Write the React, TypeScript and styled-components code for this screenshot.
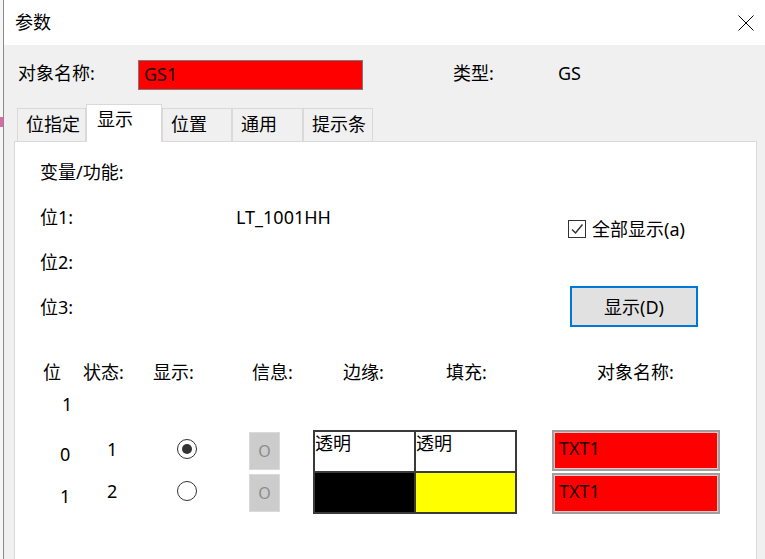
import * as React from 'react';
import styled, { createGlobalStyle } from 'styled-components';

const GlobalStyle = createGlobalStyle`
  html, body {
    margin: 0;
    padding: 0;
  }
  body {
    font-family: "Noto Sans", "Noto Sans CJK SC", sans-serif;
    font-size: 18px;
    color: #000;
    background: #fff;
  }
`;

const Screen = styled.div`
  display: flex;
  width: 765px;
  height: 559px;
  overflow: hidden;
`;

const DesktopStrip = styled.div`
  width: 3px;
  flex-shrink: 0;
  background: #f6f6f6;
`;

const PinkMark = styled.div`
  margin-top: 117px;
  height: 10px;
  background: #d86aa8;
`;

const Window = styled.div`
  flex: 1;
  display: flex;
  flex-direction: column;
  border-left: 1px solid #8a8a8a;
  background: #f0f0f0;
`;

const TitleBar = styled.div`
  height: 45px;
  flex-shrink: 0;
  display: flex;
  align-items: center;
  justify-content: space-between;
  padding: 0 11px;
  background: #fff;
`;

const Title = styled.span`
  font-size: 18px;
  line-height: 24px;
  margin-top: -1px;
`;

const Body = styled.div`
  padding: 15px 8px 0 10px;
`;

const InfoRow = styled.div`
  display: flex;
  align-items: center;
  height: 30px;
  padding-left: 4px;
`;

const Label = styled.span<{ $width?: number }>`
  display: inline-block;
  width: ${p => (p.$width ? `${p.$width}px` : 'auto')};
  line-height: 24px;
  margin-top: -4px;
  white-space: nowrap;
`;

const NameInput = styled.div`
  box-sizing: border-box;
  width: 225px;
  height: 30px;
  border: 1px solid #7a7a7a;
  background: #ff0000;
  padding-left: 5px;
  line-height: 27px;
  color: #1a0000;
  margin-right: 90px;
`;

const TabStrip = styled.div`
  display: flex;
  align-items: flex-end;
  margin-top: 14px;
  padding-left: 3px;
  height: 37px;
`;

const Tab = styled.div<{ $width: number; $active?: boolean }>`
  box-sizing: border-box;
  position: relative;
  z-index: ${p => (p.$active ? 1 : 0)};
  width: ${p => p.$width}px;
  height: ${p => (p.$active ? 38 : 33)}px;
  margin-bottom: ${p => (p.$active ? -1 : 0)}px;
  padding: ${p => (p.$active ? '2px 0 0 10px' : '3px 0 0 8px')};
  border: 1px solid #d9d9d9;
  border-bottom: none;
  background: ${p => (p.$active ? '#fff' : '#f0f0f0')};
  line-height: 24px;
  white-space: nowrap;
`;

const Panel = styled.div`
  box-sizing: border-box;
  height: 440px;
  border: 1px solid #d9d9d9;
  background: #fff;
  padding: 7px 0 0 25px;
`;

const TopSection = styled.div`
  display: flex;
`;

const FieldGrid = styled.div`
  width: 528px;
  display: grid;
  grid-template-columns: 196px 1fr;
  grid-auto-rows: 45px;
  align-items: center;
`;

const FieldText = styled.span<{ $span?: boolean }>`
  line-height: 24px;
  grid-column: ${p => (p.$span ? '1 / 3' : 'auto')};
`;

const RightColumn = styled.div`
  display: flex;
  flex-direction: column;
  align-items: flex-start;
`;

const CheckRow = styled.label`
  display: flex;
  align-items: center;
  gap: 6px;
  margin-top: 68px;
  line-height: 24px;
  white-space: nowrap;
`;

const CheckBox = styled.span`
  box-sizing: border-box;
  width: 18px;
  height: 18px;
  border: 1px solid #333;
  background: #fff;
  display: flex;
  align-items: center;
  justify-content: center;
`;

const ShowButton = styled.button`
  box-sizing: border-box;
  margin: 45px 0 0 2px;
  width: 128px;
  height: 41px;
  border: 2px solid #0078d7;
  background: #e1e1e1;
  font-family: inherit;
  font-size: 18px;
  color: #000;
  padding: 0 0 2px;
`;

const HeaderRow = styled.div`
  display: flex;
  margin-top: 31px;
  line-height: 24px;
`;

const HeaderCell = styled.span<{ $width?: number; $pad?: number }>`
  width: ${p => (p.$width ? `${p.$width}px` : 'auto')};
  padding-left: ${p => p.$pad ?? 0}px;
  box-sizing: border-box;
  white-space: nowrap;
`;

const SubHeader = styled.div`
  margin-top: 8px;
  padding-left: 22px;
  line-height: 24px;
`;

const DataArea = styled.div`
  display: flex;
  margin-top: 14px;
`;

const StateGrid = styled.div`
  display: grid;
  grid-template-columns: 60px 60px 80px 73px;
  grid-auto-rows: 42px;
`;

const Cell = styled.div<{ $pad: number; $shift?: number; $top?: boolean }>`
  display: flex;
  align-items: ${p => (p.$top ? 'flex-start' : 'center')};
  padding-left: ${p => p.$pad}px;
  padding-top: ${p => (p.$shift && p.$shift > 0 ? p.$shift : 0)}px;
  padding-bottom: ${p => (p.$shift && p.$shift < 0 ? -p.$shift : 0)}px;
  line-height: 24px;
`;

const Radio = styled.span<{ $checked?: boolean }>`
  box-sizing: border-box;
  width: 20px;
  height: 20px;
  border: 1.5px solid #333;
  border-radius: 50%;
  display: flex;
  align-items: center;
  justify-content: center;

  &::after {
    content: '';
    display: ${p => (p.$checked ? 'block' : 'none')};
    width: 10px;
    height: 10px;
    border-radius: 50%;
    background: #333;
  }
`;

const InfoBox = styled.span`
  box-sizing: border-box;
  margin-top: 2px;
  width: 31px;
  height: 38px;
  border: 1px solid #dadada;
  background: #cccccc;
  display: flex;
  align-items: center;
  justify-content: center;
  font-size: 16px;
  color: #8c8c8c;
`;

const ColorTable = styled.div`
  display: grid;
  grid-template-columns: 99px 99px;
  grid-template-rows: 39px 39px;
  gap: 2px;
  padding: 2px;
  background: #3a3a3a;
`;

const ColorCell = styled.div<{ $bg: string }>`
  background: ${p => p.$bg};
  font-size: 18px;
  line-height: 22px;
  padding-top: 0;
  white-space: nowrap;
`;

const NameList = styled.div`
  margin-left: 35px;
  width: 168px;
  display: flex;
  flex-direction: column;
  gap: 2px;
`;

const NameCell = styled.div`
  box-sizing: border-box;
  height: 41px;
  border: 2px solid #a0a0a0;
  box-shadow: inset 0 0 0 1px #f3c4c4;
  background: #ff0000;
  padding: 2px 0 0 5px;
  line-height: 28px;
  color: #1a0000;
`;

const CloseIcon = () => (
  <svg width="16" height="16" viewBox="0 0 16 16">
    <path d="M0.5 0.5 L15.5 15.5 M15.5 0.5 L0.5 15.5" stroke="#000" strokeWidth="1" fill="none" />
  </svg>
);

const CheckMark = () => (
  <svg width="14" height="14" viewBox="0 0 14 14">
    <path d="M2 7.5 L5.5 11 L12.5 2.5" stroke="#333" strokeWidth="1.5" fill="none" />
  </svg>
);

const tabs = [
  { label: '位指定', width: 69 },
  { label: '显示', width: 76, active: true },
  { label: '位置', width: 70 },
  { label: '通用', width: 71 },
  { label: '提示条', width: 70 },
];

const rows = [
  { bit: '0', state: '1', checked: true, border: '#fff', borderText: '透明', fill: '#fff', fillText: '透明', name: 'TXT1' },
  { bit: '1', state: '2', checked: false, border: '#000', borderText: '', fill: '#ffff00', fillText: '', name: 'TXT1' },
];

export default function App() {
  return (
    <Screen>
      <GlobalStyle />
      <DesktopStrip>
        <PinkMark />
      </DesktopStrip>
      <Window>
        <TitleBar>
          <Title>参数</Title>
          <CloseIcon />
        </TitleBar>
        <Body>
          <InfoRow>
            <Label $width={120}>对象名称:</Label>
            <NameInput>GS1</NameInput>
            <Label $width={105}>类型:</Label>
            <Label>GS</Label>
          </InfoRow>
          <TabStrip>
            {tabs.map(t => (
              <Tab key={t.label} $width={t.width} $active={t.active}>
                {t.label}
              </Tab>
            ))}
          </TabStrip>
          <Panel>
            <TopSection>
              <FieldGrid>
                <FieldText $span>变量/功能:</FieldText>
                <FieldText>位1:</FieldText>
                <FieldText>LT_1001HH</FieldText>
                <FieldText $span>位2:</FieldText>
                <FieldText $span>位3:</FieldText>
              </FieldGrid>
              <RightColumn>
                <CheckRow>
                  <CheckBox>
                    <CheckMark />
                  </CheckBox>
                  全部显示(a)
                </CheckRow>
                <ShowButton>显示(D)</ShowButton>
              </RightColumn>
            </TopSection>

            <HeaderRow>
              <HeaderCell $width={43} $pad={3}>位</HeaderCell>
              <HeaderCell $width={70}>状态:</HeaderCell>
              <HeaderCell $width={99}>显示:</HeaderCell>
              <HeaderCell $width={91}>信息:</HeaderCell>
              <HeaderCell $width={103}>边缘:</HeaderCell>
              <HeaderCell $width={151}>填充:</HeaderCell>
              <HeaderCell>对象名称:</HeaderCell>
            </HeaderRow>
            <SubHeader>1</SubHeader>

            <DataArea>
              <StateGrid>
                {rows.map(r => (
                  <React.Fragment key={r.bit}>
                    <Cell $pad={20} $shift={6}>{r.bit}</Cell>
                    <Cell $pad={7} $shift={-4}>{r.state}</Cell>
                    <Cell $pad={17} $shift={-4}>
                      <Radio $checked={r.checked} />
                    </Cell>
                    <Cell $pad={9} $top>
                      <InfoBox>O</InfoBox>
                    </Cell>
                  </React.Fragment>
                ))}
              </StateGrid>
              <ColorTable>
                {rows.map(r => (
                  <React.Fragment key={r.bit}>
                    <ColorCell $bg={r.border}>{r.borderText}</ColorCell>
                    <ColorCell $bg={r.fill}>{r.fillText}</ColorCell>
                  </React.Fragment>
                ))}
              </ColorTable>
              <NameList>
                {rows.map(r => (
                  <NameCell key={r.bit}>{r.name}</NameCell>
                ))}
              </NameList>
            </DataArea>
          </Panel>
        </Body>
      </Window>
    </Screen>
  );
}
